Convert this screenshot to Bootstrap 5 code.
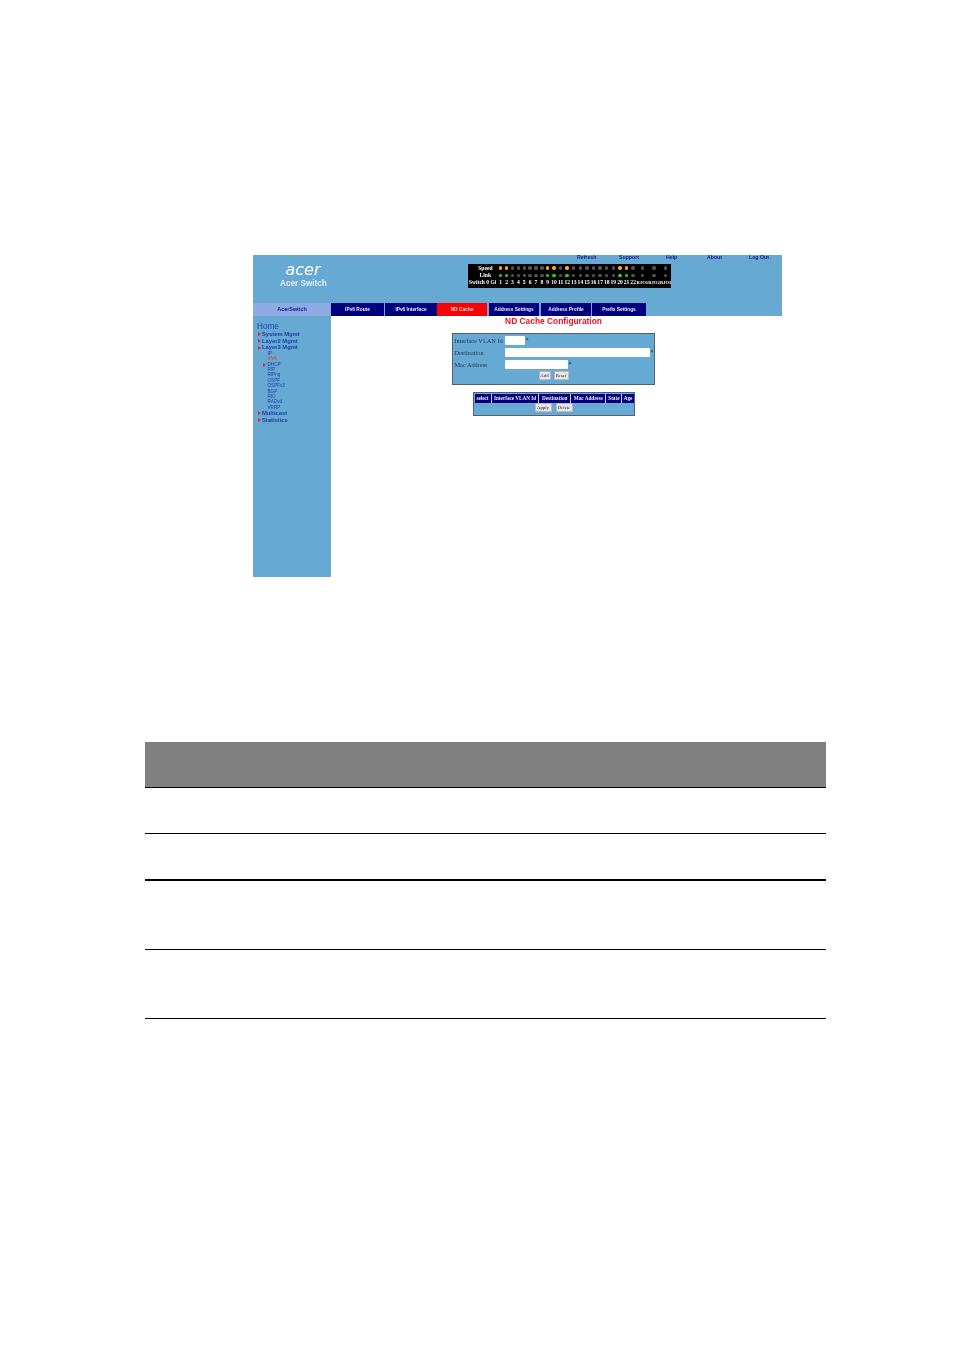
<!DOCTYPE html>
<html lang="en">
<head>
<meta charset="utf-8">
<title>ND Cache Configuration</title>
<link rel="stylesheet" href="https://cdn.jsdelivr.net/npm/bootstrap@5.3.0/dist/css/bootstrap.min.css">
<style>
body{background:#fff;margin:0;font-family:"Liberation Sans",sans-serif}
.shot-wrap{padding:255px 0 0 253px}
.shot{width:529px;height:322px;filter:blur(.45px);--blue:#66a9d3}
.shot-head{background:var(--blue);height:61px}
.head-top{height:48px}
.logo-col{width:215px;color:#e4edf3;padding:8px 0 0 27px}
.logo-word{font-size:16px;line-height:14px;font-style:italic;font-weight:400;color:#fff;text-align:center;width:46px;font-family:"DejaVu Sans",sans-serif}
.logo-name{font-size:8.2px;line-height:9px;font-weight:700;margin-top:2px;white-space:nowrap}
.top-links{display:grid;grid-template-columns:42px 47px 41px 42px auto;padding-left:109px;height:9px;font-size:5.2px;line-height:5px;font-weight:700;color:#14208a}
.led-panel{display:grid;grid-template-columns:29.7px repeat(9,5.9px) repeat(13,6.6px) repeat(3,11.7px);grid-auto-rows:7.3px;width:203px;height:24px;background:#000;color:#fff;font-family:"Liberation Serif",serif;font-size:5.6px;font-weight:700;line-height:7.3px;padding-top:.5px;text-align:center;white-space:nowrap}
.led-name{padding-left:5px;text-align:center}
.led-cell{display:flex;align-items:center;justify-content:center}
.led-dot{width:3.4px;height:3.4px;border-radius:50%;background:#555}
.led-a{background:#ffb000}
.led-g{background:#1fdc1a}
.sw-name{text-align:left;padding-left:1px;font-size:5.5px}
.rj-name{font-size:4.6px}
.nav-row{height:13px;font-size:4.8px;line-height:13px;font-weight:700;color:#e8ecfa}
.side-title{width:78px;background:#8fabe4;color:#10208c;text-align:center;font-size:5.4px}
.tab-cell{background:#00007f;text-align:center;height:13px}
.tab-on{background:#ff0000;color:#ffe0e0}
.shot-body{height:261px}
.side-menu{width:78px;background:var(--blue);padding:7px 0 0 4px;color:#1c3fa6;font-size:5.8px;line-height:6.7px;font-weight:700}
.menu-home{font-size:8.2px;line-height:8px;color:#1c4aa8;margin-bottom:0;font-weight:400}
.menu-item{position:relative;padding-left:5px}
.menu-item::before{content:"";position:absolute;left:1px;top:1.2px;border-left:3px solid #f0202a;border-top:2px solid transparent;border-bottom:2px solid transparent}
.menu-sub{font-size:4.6px;line-height:5.35px;padding-left:10.5px;font-weight:400}
.menu-sub-on{color:#f0303a}
.menu-dhcp{position:relative}
.menu-dhcp::before{content:"";position:absolute;left:6px;top:.8px;border-left:3px solid #f0202a;border-top:2px solid transparent;border-bottom:2px solid transparent}
.main-col{flex:1;background:#fff}
.cfg-title{color:#f01020;font-size:8.4px;line-height:10px;font-weight:700;width:445px;text-align:center}
.cfg-box{margin:7px 0 0 121px;width:203px;height:52px;background:var(--blue);border:1.5px solid #56606c;padding:2px 0 0;font-family:"Liberation Serif",serif;font-size:6.3px;color:#203a55}
.cfg-row{height:12px;align-items:flex-start}
.cfg-lab{width:51.5px;white-space:nowrap;line-height:9px;padding-left:1.5px}
.cfg-in{background:#fff;height:8.5px;border-radius:1px}
.w-vlan{width:20px}.w-dest{width:145px}.w-mac{width:63px}
.star{font-size:6px;line-height:9px;padding-left:1px;color:#111}
.mini-btn{--bs-btn-padding-x:0;--bs-btn-padding-y:0;--bs-btn-font-size:4.8px;--bs-btn-border-radius:1px;--bs-btn-line-height:8px;--bs-btn-bg:#e8e8e8;--bs-btn-border-color:#b8bcc0;--bs-btn-color:#222;height:9px;font-family:"Liberation Serif",serif}
.btns-a{gap:3px;margin-left:85.5px;margin-top:-1px}
.bt-add{width:12px}.bt-reset{width:15px}.bt-apply{width:17px}.bt-del{width:17px}
.res-box{margin:6.5px 0 0 142px;width:162px;height:24.5px;background:var(--blue);border:1.5px solid #56606c;padding:1px .5px 0}
.res-head{display:grid;grid-template-columns:17px 47px 31px 35px 15px 1fr;gap:.6px;height:9px;background:#00007f;color:#e4e8f6;font-family:"Liberation Serif",serif;font-weight:700;font-size:5.2px;line-height:9px;white-space:nowrap;overflow:hidden;text-align:center}
.res-head span{border-right:.5px solid #c8d0f0;overflow:hidden}
.res-head span:last-child{border-right:0}
.btns-b{gap:4px;margin:.5px 0 0 60px}
.doc-table{width:681px;margin:165px 0 0 145px}
.doc-table th,.doc-table td{padding:0;background:transparent;box-shadow:none;border-color:#000}
.doc-table th{background:#808080;height:45px;border-bottom:1px solid #000}
.doc-table td{border-bottom:1px solid #000}
.r-46{height:46px}
.r-47{height:47px}
.r-69{height:69px}
.doc-table td.heavy{border-bottom-width:2px}
</style>
</head>
<body>
<div class="shot-wrap">
  <div class="shot d-flex flex-column">
    <div class="shot-head d-flex flex-column">
      <div class="head-top d-flex">
        <div class="logo-col">
          <div class="logo-word">acer</div>
          <div class="logo-name">Acer Switch</div>
        </div>
        <div class="d-flex flex-column">
          <div class="top-links"><span>Refresh</span><span>Support</span><span>Help</span><span>About</span><span>Log Out</span></div>
          <div class="led-panel" id="leds"></div>
        </div>
      </div>
      <div class="nav-row d-flex">
        <div class="side-title">AcerSwitch</div>
        <div class="tab-cell" style="width:53px">IPv6 Route</div>
        <div class="tab-cell" style="width:52px;margin-left:1px">IPv6 Interface</div>
        <div class="tab-cell tab-on" style="width:50px;margin-left:0">ND Cache</div>
        <div class="tab-cell" style="width:50px;margin-left:2px">Address Settings</div>
        <div class="tab-cell" style="width:50px;margin-left:2px">Address Profile</div>
        <div class="tab-cell" style="width:54px;margin-left:1px">Prefix Settings</div>
      </div>
    </div>
    <div class="shot-body d-flex">
      <div class="side-menu">
        <div class="menu-home">Home</div>
        <div class="menu-item">System Mgmt</div>
        <div class="menu-item">Layer2 Mgmt</div>
        <div class="menu-item">Layer3 Mgmt</div>
        <div class="menu-sub">IP</div>
        <div class="menu-sub menu-sub-on">IPv6</div>
        <div class="menu-sub menu-dhcp">DHCP</div>
        <div class="menu-sub">RIP</div>
        <div class="menu-sub">RIPng</div>
        <div class="menu-sub">OSPF</div>
        <div class="menu-sub">OSPFv3</div>
        <div class="menu-sub">BGP</div>
        <div class="menu-sub">RIO</div>
        <div class="menu-sub">RADvd</div>
        <div class="menu-sub">VRRP</div>
        <div class="menu-item">Multicast</div>
        <div class="menu-item">Statistics</div>
      </div>
      <div class="main-col">
        <div class="cfg-title">ND Cache Configuration</div>
        <div class="cfg-box">
          <div class="cfg-row d-flex"><div class="cfg-lab">Interface VLAN Id</div><div class="cfg-in w-vlan"></div><div class="star">*</div></div>
          <div class="cfg-row d-flex"><div class="cfg-lab">Destination</div><div class="cfg-in w-dest"></div><div class="star">*</div></div>
          <div class="cfg-row d-flex"><div class="cfg-lab">Mac Address</div><div class="cfg-in w-mac"></div><div class="star">*</div></div>
          <div class="d-flex btns-a"><button class="btn mini-btn bt-add">Add</button><button class="btn mini-btn bt-reset">Reset</button></div>
        </div>
        <div class="res-box">
          <div class="res-head"><span>select</span><span>Interface VLAN Id</span><span>Destination</span><span>Mac Address</span><span>State</span><span>Age</span></div>
          <div class="d-flex btns-b"><button class="btn mini-btn bt-apply">Apply</button><button class="btn mini-btn bt-del">Delete</button></div>
        </div>
      </div>
    </div>
  </div>
</div>
<table class="table doc-table">
  <thead><tr><th scope="col"></th></tr></thead>
  <tbody>
    <tr class="r-46"><td></td></tr>
    <tr class="r-47"><td class="heavy"></td></tr>
    <tr class="r-69"><td></td></tr>
    <tr class="r-69"><td></td></tr>
  </tbody>
</table>
<script>
var on=[1,2,9,10,12,20,21];
var h='';
function cells(c){var s='';for(var i=1;i<=25;i++){var k=on.indexOf(i)>=0?c:'';s+='<div class="led-cell"><div class="led-dot '+k+'"></div></div>';}return s;}
h+='<div class="led-name">Speed</div>'+cells('led-a');
h+='<div class="led-name">Link</div>'+cells('led-g');
h+='<div class="sw-name">Switch 0 Gi</div>';
for(var i=1;i<=22;i++)h+='<div>'+i+'</div>';
h+='<div class="rj-name">RJO1</div><div class="rj-name">RJO2</div><div class="rj-name">RJO3</div>';
document.getElementById('leds').innerHTML=h;
</script>
<script src="https://cdn.jsdelivr.net/npm/bootstrap@5.3.0/dist/js/bootstrap.bundle.min.js"></script>
</body>
</html>
